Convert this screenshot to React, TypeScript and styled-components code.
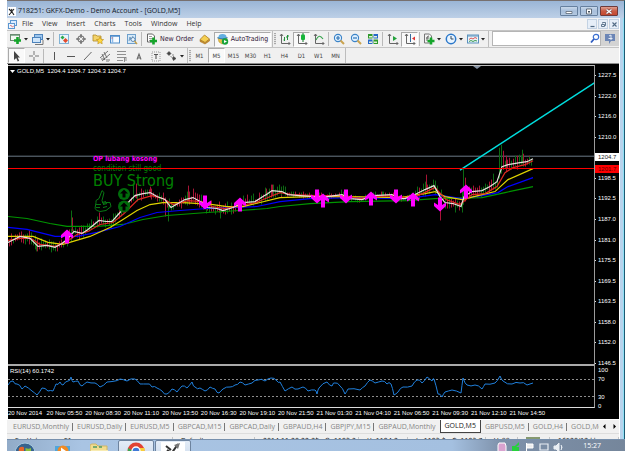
import React from "react";
import styled, { createGlobalStyle, css } from "styled-components";

const GlobalStyle = createGlobalStyle`
  * { box-sizing: border-box; }
  body {
    margin: 0;
    background: #fff;
    font-family: "DejaVu Sans Condensed", "DejaVu Sans", "Liberation Sans", sans-serif;
    font-size: 7px;
    line-height: 10px;
    overflow: hidden;
  }
  button, input { font: inherit; color: inherit; }
`;

/* ---------- frame ---------- */

const Desktop = styled.div`
  height: 100vh;
  padding-left: 7px;
  display: flex;
  flex-direction: column;
`;

const Frame = styled.div`
  flex: 1;
  min-height: 0;
  display: grid;
  grid-template-columns: minmax(0, 1fr) 5px;
  grid-template-rows: 17px minmax(0, 1fr);
  border-top: 1px solid #77706f;
  border-right: 1px solid #1d5a74;
`;

const Main = styled.main`
  min-width: 0;
  min-height: 0;
  display: flex;
  flex-direction: column;
`;

const FrameEdge = styled.div`
  border-left: 1px solid #fff;
  border-right: 1px solid #8fe0f5;
  background: #b8d3ec;
`;

const TitleBar = styled.header`
  grid-column: 1 / -1;
  padding: 3px 6px 0 1px;
  display: flex;
  align-items: center;
  gap: 2px;
  color: #10151d;
  white-space: nowrap;
  background: linear-gradient(#9ab5d6, #bdd0e7);
`;

const TitleText = styled.h1`
  flex: 1;
  margin: 0;
  font-size: 7px;
  line-height: 10px;
  font-weight: 400;
  font-family: "Open Sans", "Noto Sans", sans-serif;
`;

const WindowButton = styled.button<{ $danger?: boolean }>`
  width: 18px;
  height: 10px;
  padding: 0;
  display: flex;
  align-items: center;
  justify-content: center;
  border: 1px solid ${(p) => (p.$danger ? "#6e3a3a" : "#66809f")};
  border-radius: 1px;
  background: ${(p) =>
    p.$danger
      ? "linear-gradient(#dfa091, #c95b44 50%, #c4482f)"
      : "linear-gradient(#c8d8ea, #a8bfdb 50%, #b3c8e0)"};
`;

const MenuBar = styled.nav`
  height: 12px;
  padding-left: 1px;
  display: flex;
  align-items: center;
  background: #f3f3f4;
  color: #333;
  font-family: "Open Sans", "Noto Sans", sans-serif;
`;

const MenuItem = styled.button`
  padding: 0;
  margin-right: 9px;
  border: 0;
  background: none;
  line-height: 10px;
`;

const MenuIcon = styled.span`
  width: 14px;
  display: flex;
`;

const MdiButtons = styled.div`
  margin-left: auto;
  display: flex;
  gap: 1px;
`;

const MdiButton = styled.button`
  width: 10px;
  height: 10px;
  padding: 0;
  display: flex;
  align-items: center;
  justify-content: center;
  border: 1px solid #c3d2e3;
  background: #e6eef8;
`;

/* ---------- toolbars ---------- */

const Toolbar = styled.div<{ $last?: boolean }>`
  height: 17px;
  display: flex;
  background: #f0f0f0;
  border-top: 1px solid #c4c4c4;
  ${(p) => p.$last && css`border-bottom: 1px solid #8c8c8c;`}
`;

const Group = styled.div`
  display: flex;
  align-items: center;
  padding: 0 1px;
  border-right: 1px solid #bdbdbd;
`;

const Separator = styled.div`
  width: 1px;
  height: 14px;
  margin: 0 1px;
  background: #b9b9b9;
`;

const Grip = styled.div`
  width: 2px;
  height: 12px;
  background: repeating-linear-gradient(#aaa 0 1px, #e4e4e4 1px 2px);
`;

const ToolButton = styled.button<{ $pressed?: boolean; $wide?: boolean }>`
  min-width: ${(p) => (p.$wide ? 22 : 17)}px;
  height: 15px;
  padding: 0 1px;
  display: flex;
  align-items: center;
  justify-content: center;
  gap: 2px;
  color: #333;
  border: 1px solid transparent;
  background: none;
  white-space: nowrap;
  ${(p) =>
    p.$pressed &&
    css`
      background: #f9f9f9;
      border-color: #aaa #fff #fff #aaa;
    `}
`;

const LabelButton = styled(ToolButton)`
  color: #301638;
  gap: 2px;
  padding: 0 2px;
`;

const PeriodButton = styled(ToolButton)`
  min-width: 0;
  width: 17px;
  padding: 0;
  font-size: 6px;
  color: #444;
`;

const SearchBox = styled.label`
  flex: 1;
  margin: 0 0 1px 3px;
  display: flex;
  align-items: center;
  border: 1px solid #b5b5b5;
  background: #fff;
`;

const SearchInput = styled.input`
  flex: 1;
  min-width: 0;
  height: 12px;
  padding: 0 2px;
  border: 0;
  outline: 0;
  background: none;
`;

const ChatButton = styled.button`
  width: 18px;
  height: 15px;
  padding: 0;
  display: flex;
  align-items: center;
  justify-content: center;
  border: 0;
  background: #d3d3d3;
`;

/* ---------- chart ---------- */

const ChartWindow = styled.section`
  flex: 1;
  min-height: 0;
  margin-left: 1px;
  padding-top: 1px;
  display: grid;
  grid-template-columns: minmax(0, 1fr) 24px;
  grid-template-rows: minmax(0, 1fr) 44px 11px;
  background: #000;
  color: #fff;
  font-family: "Liberation Sans", Arial, sans-serif;
  font-size: 6px;
  line-height: 8px;
`;

const PricePanel = styled.div`
  position: relative;
  min-height: 0;
  border-top: 1px solid #bcbcbc;
  border-right: 1px solid #9b9b9b;
`;

const RsiPanel = styled.div`
  position: relative;
  border-top: 2px solid #aaa;
  border-right: 1px solid #9b9b9b;
  border-bottom: 1px solid #ddd;
`;

const Drawing = styled.svg`
  display: block;
  width: 100%;
  height: 100%;
`;

const PanelCaption = styled.div`
  position: absolute;
  left: 2px;
  top: 1px;
  display: flex;
  align-items: center;
  gap: 2px;
  white-space: pre;
`;

const Signal = styled.div`
  position: absolute;
  left: 85px;
  top: 89px;
  display: flex;
  flex-direction: column;
  white-space: nowrap;
  color: #008000;
  font-family: "DejaVu Sans Condensed", "DejaVu Sans", sans-serif;
`;

const SignalNote = styled.span<{ $strong?: boolean }>`
  font-size: 8px;
  line-height: 9px;
  ${(p) => p.$strong && css`color: #f0f; font-size: 7px; font-weight: 700;`}
`;

const SignalTitle = styled.strong`
  font-size: 16px;
  line-height: 15px;
  font-weight: 400;
`;

const AlertLine = styled.div`
  position: absolute;
  left: 0;
  right: 0;
  top: 102px;
  height: 1px;
  background: #f00;
`;

const PriceAxis = styled.div`
  position: relative;
  margin-bottom: -3px;
  padding-top: 6px;
  display: flex;
  flex-direction: column;
  justify-content: space-between;
`;

const PriceLabel = styled.div<{ $current?: boolean }>`
  position: relative;
  height: 8px;
  padding-left: 3px;
  ${(p) =>
    p.$current
      ? css`background: #fff; color: #222;`
      : css`
          &::before {
            content: "";
            position: absolute;
            left: 0;
            top: 4px;
            width: 1px;
            height: 1px;
            background: #ddd;
          }
        `}
`;

const AlertPrice = styled.div`
  position: absolute;
  left: 0;
  right: 0;
  top: 100px;
  padding-left: 3px;
  background: #f00;
  color: #500;
`;

const RsiAxis = styled.div`
  margin-bottom: -3px;
  padding: 2px 0 0 3px;
  display: flex;
  flex-direction: column;
  justify-content: space-between;
  line-height: 9px;
`;

const RsiPair = styled.div`
  display: flex;
  flex-direction: column;
`;

const TimeAxis = styled.div`
  width: 92%;
  display: grid;
  grid-template-columns: repeat(14, minmax(0, 1fr));
  line-height: 11px;
  white-space: nowrap;
`;

/* ---------- bottom ---------- */

const TabBar = styled.div`
  height: 14px;
  display: flex;
  align-items: stretch;
  border-top: 1px solid #fff;
  background: #f1f1f1;
  color: #858585;
  padding-left: 2px;
  font-family: "Open Sans", "Noto Sans", sans-serif;
`;

const TabList = styled.div`
  flex: 1;
  min-width: 0;
  display: flex;
  overflow: hidden;
`;

const Tab = styled.button<{ $active?: boolean; $bare?: boolean }>`
  flex: none;
  padding: 0 4px;
  border: 0;
  background: none;
  position: relative;
  line-height: 10px;
  ${(p) =>
    p.$active
      ? css`
          color: #222;
          background: #fff;
          border: 1px solid #444;
          border-top: 0;
        `
      : !p.$bare &&
        css`
          &::after {
            content: "";
            position: absolute;
            right: 0;
            top: 3px;
            width: 1px;
            height: 8px;
            background: #777;
          }
        `}
`;

const TabScroll = styled.button`
  width: 10px;
  padding: 0;
  border: 0;
  background: none;
  display: flex;
  align-items: center;
  justify-content: center;
`;

const StatusBar = styled.footer`
  height: 6px;
  padding-top: 3px;
  display: grid;
  grid-template-columns: 166px 82px 62px 42px 49px 36px 42px 32px 32px 1fr;
  overflow: hidden;
  background: #f0f0f0;
  border-top: 1px solid #ddd;
  color: #222;
`;

const StatusCell = styled.span`
  padding-left: 8px;
  border-right: 1px solid #c5c5c5;
  white-space: nowrap;
  line-height: 8px;
`;

const Taskbar = styled.div`
  height: 12px;
  padding-right: 24px;
  display: flex;
  align-items: flex-start;
  overflow: hidden;
  border-top: 1px solid #7790ad;
  background: linear-gradient(90deg, #91abc8, #a9c4e3 12%, #a4c0e0 72%, #7e91aa 80%, #75869b);
`;

const TaskButton = styled.button<{ $open?: boolean }>`
  width: 36px;
  height: 24px;
  flex: none;
  margin-right: 1px;
  padding: 1px 0 0;
  display: flex;
  justify-content: center;
  align-items: flex-start;
  border: 1px solid transparent;
  border-radius: 2px;
  background: none;
  ${(p) =>
    p.$open &&
    css`
      border-color: #6d839e;
      background: linear-gradient(#e3ecf7, #c9d8ea);
    `}
`;

const Tray = styled.div`
  margin-left: auto;
  display: flex;
  gap: 4px;
  color: #fff;
  padding-top: 1px;
  font-family: "Open Sans", "Noto Sans", sans-serif;
`;

const Clock = styled.time`
  padding-left: 16px;
`;

/* ---------- icons ---------- */

const Glyph = ({ name, w = 12, h = 12 }: { name: string; w?: number; h?: number }) => (
  <svg width={w} height={h} viewBox={`0 0 ${w} ${h}`} fill="none" aria-hidden="true">
    {glyphs[name]}
  </svg>
);

const plus = (x: number, y: number) => (
  <path d={`M${x} ${y - 3.5}v7M${x - 3.5} ${y}h7`} stroke="#15a52b" strokeWidth="2.6" />
);

const axes = <path d="M2.5 1v9.5H11M1 3l1.5-2L4 3M9.5 9l1.5 1.5L9.5 12" stroke="#666" strokeWidth="1" />;

const glyphs: Record<string, React.ReactNode> = {
  app: (
    <>
      <rect width="8" height="9" fill="#fff" />
      <path d="M1 2l2 2 1-2M1 8l5-6M4 5l2 3" stroke="#222" strokeWidth="1.1" />
    </>
  ),
  windows: (
    <>
      <rect x="2.5" y=".5" width="6" height="5" fill="#dcecff" stroke="#5c96d0" />
      <rect x=".5" y="3.5" width="6" height="5" fill="#eef6ff" stroke="#5c96d0" />
      <path d="M2 6l1-1 1 2 2-1" stroke="#d66" strokeWidth=".7" />
    </>
  ),
  min: <path d="M1 3.5h6v2H1z" fill="#fff" stroke="#4e5966" strokeWidth=".7" />,
  max: (
    <>
      <path d="M1.5 1h5v5h-5z" fill="#fff" stroke="#45515e" strokeWidth=".8" />
      <path d="M3 3h2v1.5H3z" fill="#45515e" />
    </>
  ),
  close: (
    <>
      <path d="M1.5 1.5l5 4m0-4l-5 4" stroke="#6b3a3a" strokeWidth="2.4" />
      <path d="M1.5 1.5l5 4m0-4l-5 4" stroke="#fff" strokeWidth="1.5" />
    </>
  ),
  mdiMin: <path d="M1.5 5.5h4" stroke="#526b85" strokeWidth="1.2" />,
  mdiMax: <path d="M2.5 2.5v-1h3v3h-1M1.5 3.5h3v2h-3z" stroke="#526b85" strokeWidth=".9" />,
  mdiClose: <path d="M1.5 1.5l4 4m0-4l-4 4" stroke="#526b85" strokeWidth="1.1" />,
  drop: <path d="M0 1h4L2 3.5z" fill="#222" />,
  captionMark: <path d="M0 1h5L2.5 4z" fill="#fff" />,
  left: <path d="M3.5 0v5L1 2.5z" fill="#000" />,
  right: <path d="M1.5 0v5L4 2.5z" fill="#000" />,
  signal: <path d="M1 0v7M3 0v7M5 0v7M7 0v7M9 0v7M11 0v7M13 0v7" stroke="#3f5f1c" strokeWidth="1.2" />,
  newChart: (
    <>
      <rect x=".5" y="1.5" width="9" height="6" fill="#f2f7f2" stroke="#6a8b72" />
      <path d="M1 2.5h8" stroke="#8eb29a" />
      {plus(7.5, 7.5)}
    </>
  ),
  profiles: (
    <>
      <rect x="2.5" y="1.5" width="8" height="5" fill="#9bc5ee" stroke="#4d83bb" />
      <rect x=".5" y="4.5" width="8" height="5" fill="#cfe5fa" stroke="#4d83bb" />
      <path d="M3 11.5h8V7" stroke="#777" />
    </>
  ),
  market: (
    <>
      <rect x="1.5" y="1.5" width="9" height="9" fill="#e8f4fc" stroke="#81b3d5" />
      <path d="M2.5 4.5l2-2 2 2-2 2z" fill="#2da84a" />
      <path d="M5 7.5l2.5-2.5L10 7.5 7.5 10z" fill="#e34b2d" />
    </>
  ),
  target: (
    <>
      <circle cx="6" cy="6" r="3.2" stroke="#666" />
      <path d="M6 1v4M6 7v4M1 6h4M7 6h4" stroke="#555" strokeWidth="1.1" />
    </>
  ),
  favorite: (
    <>
      <path d="M1 2h3l1 1h4v5H1z" fill="#f3d36b" stroke="#b08c27" strokeWidth=".8" />
      <path d="M8 4l1.1 2.3 2.5.3-1.8 1.7.4 2.5L8 9.6l-2.2 1.2.4-2.5-1.8-1.7 2.5-.3z" fill="#ffd83e" stroke="#b98818" strokeWidth=".6" />
    </>
  ),
  terminal: (
    <>
      <rect x="1.5" y="2.5" width="9" height="7.5" fill="#f7fbff" stroke="#4f8dca" />
      <path d="M1 3h10" stroke="#4f8dca" strokeWidth="1.5" />
      <path d="M3.5 4v6" stroke="#8ebbe8" strokeWidth="1.5" />
      <path d="M2.5 5h1" stroke="#d44" />
    </>
  ),
  tester: (
    <>
      <rect x="1.5" y="1.5" width="8" height="9" fill="#d6e9f8" stroke="#6fa0cc" />
      <path d="M3 8l1-4 1 3 2-4" stroke="#5788b5" strokeWidth=".8" />
      <circle cx="7" cy="6.5" r="2" fill="#e8f4ff" stroke="#648bb0" />
      <path d="M8.5 8l2.5 3" stroke="#c7a14a" strokeWidth="1.4" />
    </>
  ),
  order: (
    <>
      <path d="M1.5 1h5l2 2v6h-7z" fill="#fff" stroke="#666" />
      <path d="M3 3.5h3M3 5.5h4M3 7.5h2" stroke="#777" strokeWidth=".7" />
      {plus(7.5, 8)}
    </>
  ),
  editor: (
    <>
      <path d="M1 6.5L5.5 2l5 4L6 9.5z" fill="#f5cf51" stroke="#aa781e" strokeWidth=".8" />
      <path d="M1 7l5 3 4.5-3.5v1.5L6 11 1 8.5z" fill="#d9961e" stroke="#94651b" strokeWidth=".5" />
    </>
  ),
  auto: (
    <>
      <ellipse cx="5.5" cy="4" rx="4" ry="3" fill="#61aee0" />
      <path d="M1 5l4.5 1.5L10 5 9 9 5 11 2 9z" fill="#e8c24a" stroke="#b38b22" strokeWidth=".5" />
      <path d="M.5 4.5Q5 7 10.5 4.5" stroke="#317fb8" strokeWidth="1.2" />
      <circle cx="8" cy="8.5" r="3.2" fill="#18a33a" />
      <path d="M7 7l3 1.5-3 1.5z" fill="#fff" />
    </>
  ),
  bars: (
    <>
      {axes}
      <path d="M5.5 4v4M5.5 7h-1M8.5 2v5M7 4h1.5M8.5 3H10" stroke="#24913c" />
    </>
  ),
  candle: (
    <>
      {axes}
      <path d="M7 0v9" stroke="#157a2b" />
      <rect x="5" y="1.5" width="4" height="5.5" rx="1" fill="#18b53b" />
    </>
  ),
  line: (
    <>
      {axes}
      <path d="M3 7Q6 0 10 6" stroke="#35a34b" strokeWidth="1.1" />
    </>
  ),
  zoomIn: (
    <>
      <circle cx="5" cy="5" r="3.6" fill="#dff0ff" stroke="#3b83c7" strokeWidth="1.1" />
      <path d="M5 3v4M3 5h4" stroke="#2f74b5" strokeWidth="1.2" />
      <path d="M7.5 7.5l3.5 3.5" stroke="#caa350" strokeWidth="2" />
    </>
  ),
  zoomOut: (
    <>
      <circle cx="5" cy="5" r="3.6" fill="#dff0ff" stroke="#3b83c7" strokeWidth="1.1" />
      <path d="M3 5h4" stroke="#2f74b5" strokeWidth="1.2" />
      <path d="M7.5 7.5l3.5 3.5" stroke="#caa350" strokeWidth="2" />
    </>
  ),
  tile: (
    <>
      <path d="M1 1h4.5v4.5H1zM6.5 6.5H11V11H6.5z" fill="#2f9a2c" />
      <path d="M6.5 1H11v4.5H6.5zM1 6.5h4.5V11H1z" fill="#2668c8" />
      <path d="M2 3h3v1.5H2zM7 3h3v1.5H7zM2 8.5h3V10H2zM7 8.5h3V10H7z" fill="#e4f2d8" />
    </>
  ),
  scroll: (
    <>
      {axes}
      <path d="M6 3l4 2.5L6 8z" fill="#23a13b" />
    </>
  ),
  shift: (
    <>
      {axes}
      <path d="M6.5 1v8" stroke="#376b9c" />
      <path d="M11 3.5L8 5.5l3 2z" fill="#d33" />
    </>
  ),
  indicators: (
    <>
      <path d="M1.5 1h5l2 2v7h-7z" fill="#f3f3f3" stroke="#777" />
      <path d="M6 3Q4 3 4 5v3M3 5h3" stroke="#666" />
      {plus(8, 8)}
    </>
  ),
  clock: (
    <>
      <circle cx="6" cy="6" r="4.7" fill="#e8f4ff" stroke="#2b78ca" strokeWidth="1.5" />
      <path d="M6 3v3h2.5" stroke="#345" />
    </>
  ),
  template: (
    <>
      <rect x=".5" y="2" width="11" height="8" fill="#e9f4fb" stroke="#5b91bd" />
      <path d="M1 3h10" stroke="#5b91bd" />
      <path d="M2 6.5l2-1.5 2 1 2-1.5 2 1" stroke="#d55" />
      <path d="M2 8.5l2-1 2 1 2-1 2 .5" stroke="#3a9b51" />
    </>
  ),
  search: (
    <>
      <circle cx="6" cy="4" r="2.7" stroke="#3b6fd0" strokeWidth="1.2" />
      <path d="M4 6L1 9.5" stroke="#2d5bc0" strokeWidth="1.8" />
    </>
  ),
  chat: (
    <>
      <path d="M1 1h10v7H7l-2 3V8H1z" fill="#6c86b6" />
      <path d="M5 3l2-1v5M4.5 5.5h4" stroke="#e5ecf6" />
    </>
  ),
  cursor: <path d="M3 1v9l2.2-2 1.5 3.5 1.5-.7L6.7 7.5H9z" fill="#444" />,
  cross: <path d="M6 1v4M6 7v4M1 6h4M7 6h4" stroke="#777" />,
  vline: <path d="M6.5 2v8" stroke="#555" />,
  hline: <path d="M2 6.5h8" stroke="#555" />,
  trend: <path d="M2 10l7.5-8" stroke="#666" />,
  channel: <path d="M1 8l8-7M3 11l8-7M3 4l3 6M5 2l3 6M2 9h4M7 10h4M7 12h3" stroke="#555" strokeWidth=".8" />,
  fibo: <path d="M1 1.5h9M1 4.5h9M1 7.5h9M1 10.5h6M8.5 12V8h2.5M8.5 10H11" stroke="#777" strokeWidth=".8" />,
  textA: <path d="M4 9.500L6 4l2 5.500M4.500 8h3" stroke="#666" strokeWidth="1.1" />,
  textT: (
    <>
      <rect x="2" y="2" width="8" height="9" stroke="#999" strokeDasharray="1 1" />
      <path d="M4 4.5h4M6 4.5V9" stroke="#555" strokeWidth="1.1" />
    </>
  ),
  shapes: <path d="M3 1.5l2 2-2 2-2-2zM7.5 6.5l2.5 2-2.5 2-1-2zM4.5 6l2 2M6 5h2" fill="#444" stroke="#444" strokeWidth=".6" />,
  orb: (
    <>
      <circle cx="11" cy="11" r="10" fill="#36638d" stroke="#a7c8de" />
      <path d="M5 6q3-2 5-.5V11q-3-1-5.5.5z" fill="#e5652c" />
      <path d="M11.5 6q3 1.5 5.5 0v6q-3 1.5-5.5 0z" fill="#8bbf3c" />
    </>
  ),
  media: (
    <>
      <rect x="1" y="4" width="15" height="11" fill="#4fa6dc" />
      <circle cx="9" cy="9" r="5.5" fill="#f28b24" />
      <path d="M7 5.5l5 3.5-5 3z" fill="#fff" />
    </>
  ),
  folder: (
    <>
      <path d="M0 4q0-2 2-2h4l2 2h9v12H0z" fill="#f1dc8e" stroke="#d0b565" />
      <path d="M3 5h4M9 5h3" stroke="#4e9b63" strokeWidth="1.5" />
      <path d="M1 8h17v8H1z" fill="#f8ebb0" />
    </>
  ),
  chrome: (
    <>
      <circle cx="9" cy="9" r="8.5" fill="#e24334" />
      <path d="M1 6q-1 8 6 11l3-6z" fill="#37a852" />
      <path d="M10 6h7.5q1 8-6 11z" fill="#f9cf38" />
      <circle cx="9" cy="9" r="4" fill="#3e78d8" stroke="#fff" strokeWidth="1.3" />
    </>
  ),
  mt4: (
    <>
      <rect width="24" height="17" fill="#fff" />
      <path d="M5 4l5 4M8 15L17 2M6 8l6 4" stroke="#333" strokeWidth="2" />
      <path d="M13 3l6-2-2 6z" fill="#777" />
    </>
  ),
  trayRound: <path d="M2 2h6l1 3v6H1V4z" fill="#d9a3cf" stroke="#fff" />,
  trayArrow: <path d="M1 5h3L8 1v3l-3 2h3v4H1z" fill="#26d13b" />,
  trayFlag: <path d="M1.5 2v10M2 3h6v4H2" fill="#eee" stroke="#fff" />,
  trayNet: <path d="M1 3h8v6H1zM3 11h4" stroke="#e9eef4" strokeWidth="1.2" />,
  traySound: <path d="M1 5h2l3-3v9L3 8H1zM8 4q2 2 0 5" fill="#e9eef4" stroke="#e9eef4" />,
};

/* ---------- chart data ---------- */

type Point = [number, number];

const fast: Point[] = [
  [8, 243], [14, 240], [20, 237], [30, 239], [38, 247], [47, 246], [55, 248], [62, 244], [67, 240], [74, 232],
  [82, 234], [88, 230], [99, 221], [106, 222], [112, 222], [120, 213], [127, 204], [135, 196], [143, 194], [150, 193],
  [157, 197], [165, 200], [171, 208], [178, 204], [185, 200], [193, 198], [202, 203], [207, 208], [217, 209], [223, 211],
  [233, 208], [243, 203], [255, 202], [263, 197], [268, 194], [272, 191], [282, 192], [288, 195], [300, 196], [315, 197],
  [327, 197], [342, 195], [350, 199], [362, 200], [373, 196], [392, 195], [400, 199], [405, 199], [415, 195], [425, 190],
  [434, 186], [440, 197], [445, 203], [453, 204], [461, 207], [464, 197], [472, 192], [482, 191], [490, 187], [497, 182],
  [502, 167], [508, 165], [520, 163], [527, 162], [533, 159],
];

const slow: Point[] = [
  [8, 241], [20, 239], [31, 239], [40, 245], [55, 247], [67, 242], [77, 235], [88, 232], [100, 225], [113, 223],
  [124, 214], [138, 200], [152, 196], [163, 199], [173, 205], [188, 201], [202, 202], [212, 207], [225, 209], [240, 206],
  [256, 203], [268, 198], [280, 193], [292, 195], [316, 196], [345, 196], [360, 199], [375, 197], [393, 196], [405, 198],
  [418, 196], [435, 188], [446, 200], [460, 205], [472, 195], [485, 194], [497, 187], [505, 173], [513, 168], [525, 165], [533, 161],
];

const yellow: Point[] = [
  [8, 237], [33, 237], [48, 243], [63, 245], [90, 237], [110, 228], [123, 220], [137, 211], [150, 205], [163, 203],
  [183, 203], [200, 204], [213, 205], [227, 207], [243, 207], [260, 203], [280, 198], [310, 197], [350, 197], [400, 198],
  [425, 194], [435, 192], [445, 197], [462, 200], [478, 196], [495, 192], [508, 180], [533, 169],
];

const blue: Point[] = [
  [8, 228], [27, 230], [43, 234], [55, 237], [77, 237], [97, 233], [120, 227], [140, 218], [157, 213], [180, 211],
  [207, 209], [233, 208], [257, 207], [280, 202], [310, 199], [350, 198], [407, 199], [435, 195], [462, 199], [482, 196],
  [498, 193], [508, 187], [533, 178],
];

const green: Point[] = [
  [8, 217], [27, 219], [50, 224], [67, 227], [97, 227], [123, 225], [143, 220], [167, 216], [207, 213], [240, 211],
  [267, 209], [280, 207], [310, 204], [350, 202], [407, 201], [435, 199], [482, 198], [505, 193], [533, 187],
];

const spikes: [number, number, number, boolean][] = [
  [36, 243, 252, true], [71, 211, 228, true], [72, 218, 232, false], [99, 213, 222, false], [133, 184, 201, true],
  [136, 184, 199, false], [150, 187, 198, false], [165, 200, 217, false], [168, 206, 222, true], [188, 186, 202, false],
  [193, 189, 200, false], [206, 203, 214, true], [220, 208, 219, true], [266, 189, 197, false], [272, 185, 196, false],
  [281, 187, 196, true], [341, 190, 199, true], [382, 192, 198, true], [426, 175, 190, false], [433, 181, 191, true],
  [440, 202, 221, false], [455, 203, 213, true], [462, 190, 213, true], [463, 168, 205, true], [465, 178, 200, false],
  [493, 174, 188, true], [499, 148, 178, true], [501, 145, 172, true], [503, 151, 170, false], [506, 156, 172, false],
  [515, 156, 166, true], [522, 150, 164, true], [523, 154, 164, false], [529, 157, 165, true],
];

const rsi: Point[] = [
  [8, 386], [13, 382], [17, 385], [22, 390], [25, 387], [32, 392], [37, 396], [42, 389], [48, 392], [53, 392],
  [56, 385], [60, 383], [63, 386], [68, 382], [71, 378], [73, 383], [78, 382], [82, 387], [87, 383], [95, 384],
  [100, 388], [107, 383], [115, 382], [120, 380], [127, 382], [135, 380], [140, 385], [147, 385], [152, 388], [157, 389],
  [162, 392], [167, 395], [172, 390], [177, 393], [182, 387], [187, 389], [192, 383], [195, 388], [200, 389], [205, 392],
  [210, 388], [215, 390], [219, 394], [223, 390], [230, 388], [235, 386], [240, 383], [245, 386], [252, 384], [258, 381],
  [265, 382], [271, 379], [277, 382], [280, 383], [285, 392], [292, 388], [298, 390], [303, 388], [308, 392], [315, 391],
  [317, 395], [319, 389], [327, 383], [332, 387], [335, 384], [340, 387], [345, 395], [348, 390], [360, 391], [365, 387],
  [370, 381], [375, 384], [382, 382], [387, 385], [391, 385], [394, 396], [398, 393], [403, 388], [412, 387], [417, 381],
  [422, 384], [427, 378], [432, 382], [434, 380], [438, 395], [442, 398], [445, 393], [452, 391], [461, 394], [463, 379],
  [467, 386], [475, 386], [482, 390], [485, 385], [495, 384], [500, 377], [503, 382], [512, 385], [520, 384], [527, 386], [533, 384],
];

const arrows: [number, number, boolean][] = [
  [67, 230, true], [205, 196, false], [240, 198, true], [317, 190, false], [323, 194, true], [346, 190, false],
  [371, 192, true], [396, 190, false], [413, 193, true], [440, 198, false], [466, 185, true],
];

const prices = [
  "1227.5", "1222.0", "1216.0", "1210.0", "1204.7", "1198.5", "1192.5", "1187.0",
  "1181.0", "1175.5", "1169.5", "1163.5", "1158.0", "1152.0", "1146.5",
];

const times = [
  "20 Nov 2014", "20 Nov 05:50", "20 Nov 08:30", "20 Nov 11:10", "20 Nov 13:50", "20 Nov 16:30", "20 Nov 19:10",
  "20 Nov 21:50", "21 Nov 01:30", "21 Nov 04:10", "21 Nov 06:50", "21 Nov 09:30", "21 Nov 12:10", "21 Nov 14:50",
];

const toPath = (points: Point[]) => "M" + points.map((p) => p.join(" ")).join("L");

const valueAt = (points: Point[], x: number) => {
  const i = Math.max(1, points.findIndex((p) => p[0] >= x));
  const [x0, y0] = points[i - 1];
  const [x1, y1] = points[i];
  return y0 + ((y1 - y0) * (x - x0)) / (x1 - x0);
};

const noise = (n: number) => {
  const v = Math.sin(n * 12.9898) * 43758.5453;
  return v - Math.floor(v);
};

const candles = Array.from({ length: 262 }, (_, i) => {
  const x = 9 + i * 2;
  const y = valueAt(fast, x);
  const calm = x > 285 && x < 415 ? 0.5 : 1;
  return {
    x,
    top: Math.round(y - (1 + noise(i) * 7) * calm),
    bottom: Math.round(y + (1 + noise(i + 500) * 6) * calm),
    up: noise(i + 900) > 0.5,
  };
}).filter((c) => c.x <= 533);

const roughRsi = rsi.flatMap((p, i): Point[] => {
  const next = rsi[i + 1];
  if (!next) return [p];
  return [p, [(p[0] + next[0]) / 2, (p[1] + next[1]) / 2 + (noise(i) - 0.5) * 3]];
});

const UP = "#0b6a12";
const DOWN = "#a81436";

const PriceDrawing = () => (
  <Drawing viewBox="8 66 586 299" preserveAspectRatio="none" role="img" aria-label="GOLD M5 price chart">
    <path d="M8 156.5h587" stroke="#6c7a88" />
    <g strokeWidth="1">
      {candles.map((c) => (
        <path key={c.x} d={`M${c.x + 0.5} ${c.top}V${c.bottom}`} stroke={c.up ? UP : DOWN} />
      ))}
      {spikes.map(([x, a, b, up]) => (
        <path key={`${x}-${a}`} d={`M${x + 0.5} ${a}V${b}`} stroke={up ? UP : DOWN} />
      ))}
    </g>
    <g fill="none" strokeWidth="1.2">
      <path d={toPath(green)} stroke="#009500" />
      <path d={toPath(blue)} stroke="#0000ff" />
      <path d={toPath(yellow)} stroke="#e0d400" />
      <path d={toPath(slow)} stroke="#e02a22" />
      <path d={toPath(fast)} stroke="#e6e0dc" />
    </g>
    <path d="M460 170.5L595 82.5" stroke="#00dede" strokeWidth="1.5" />
    <g fill="#f0f">
      {arrows.map(([x, y, up]) => (
        <path
          key={x}
          transform={up ? `translate(${x} ${y})` : `translate(${x} ${y + 14}) scale(1 -1)`}
          d="M0 0l6 5.5v3.5l-4-2.5V14h-4V6.5L-6 9V5.5z"
        />
      ))}
    </g>
    <path
      d="M96 203l-1 6 2 2 3 1 6-1 5-4-1-4-4 0-3 1-1-3 2-8-2-2-3 8-3 2zm6 0l4-1m-3 3l4-1m-4 4l4-1m-11-2h5m-5 3h4"
      stroke="#087a14"
      fill="none"
    />
    <circle cx="124" cy="194.5" r="6" fill="#006c0b" />
    <circle cx="124" cy="207" r="6" fill="#006c0b" />
    <path d="M124 190l4 4h-2.5v4h-3v-4H120zM124 203l4 4h-2.5v4h-3v-4H120z" fill="#000" />
    <path d="M473 66h8l-4 3z" fill="#8794a5" />
  </Drawing>
);

const RsiDrawing = () => (
  <Drawing viewBox="8 367 586 41" preserveAspectRatio="none" role="img" aria-label="RSI indicator">
    <path d="M8 380.5h587M8 397.5h587" stroke="#8e8e8e" strokeDasharray="2 2" />
    <path d={toPath(roughRsi)} fill="none" stroke="#2080dd" strokeWidth="1" />
  </Drawing>
);

const Tool = ({ icon, label, pressed, drop }: { icon: string; label: string; pressed?: boolean; drop?: boolean }) => (
  <ToolButton $pressed={pressed} $wide={drop} aria-label={label}>
    <Glyph name={icon} />
    {drop && <Glyph name="drop" w={4} h={4} />}
  </ToolButton>
);

const tabs = [
  "EURUSD,Monthly", "EURUSD,Daily", "EURUSD,M5", "GBPCAD,M15", "GBPCAD,Daily", "GBPAUD,H4",
  "GBPJPY,M15", "GBPAUD,Monthly", "GOLD,M5", "GBPUSD,M5", "GOLD,H4", "GOLD,Monthly",
];

const status = [
  "For Help, press F1", "Default", "2014.11.20 22:25", "O: 1193.2", "H: 1194.2", "L: 1193.2", "C: 1193.7", "V: 88",
];

export default function App() {
  return (
    <>
      <GlobalStyle />
      <Desktop>
        <Frame>
          <TitleBar>
            <Glyph name="app" w={8} h={9} />
            <TitleText>718251: GKFX-Demo - Demo Account - [GOLD,M5]</TitleText>
            <WindowButton aria-label="Minimize"><Glyph name="min" w={8} h={7} /></WindowButton>
            <WindowButton aria-label="Maximize"><Glyph name="max" w={8} h={7} /></WindowButton>
            <WindowButton aria-label="Close" $danger><Glyph name="close" w={8} h={7} /></WindowButton>
          </TitleBar>
          <Main>
            <MenuBar>
              <MenuIcon><Glyph name="windows" w={9} h={9} /></MenuIcon>
              {["File", "View", "Insert", "Charts", "Tools", "Window", "Help"].map((m) => (
                <MenuItem key={m}>{m}</MenuItem>
              ))}
              <MdiButtons>
                <MdiButton aria-label="Minimize chart"><Glyph name="mdiMin" w={7} h={7} /></MdiButton>
                <MdiButton aria-label="Restore chart"><Glyph name="mdiMax" w={7} h={7} /></MdiButton>
                <MdiButton aria-label="Close chart"><Glyph name="mdiClose" w={7} h={7} /></MdiButton>
              </MdiButtons>
            </MenuBar>
            <Toolbar>
              <Group>
                <Tool icon="newChart" label="New chart" drop />
                <Tool icon="profiles" label="Profiles" drop />
                <Separator />
                <Tool icon="market" label="Market watch" />
                <Tool icon="target" label="Data window" />
                <Tool icon="favorite" label="Navigator" />
                <Tool icon="terminal" label="Terminal" />
                <Tool icon="tester" label="Strategy tester" />
                <Separator />
                <LabelButton><Glyph name="order" />New Order</LabelButton>
                <Tool icon="editor" label="MetaEditor" />
                <LabelButton $pressed><Glyph name="auto" />AutoTrading</LabelButton>
              </Group>
              <Group>
                <Grip />
                <Tool icon="bars" label="Bar chart" />
                <Tool icon="candle" label="Candlesticks" pressed />
                <Tool icon="line" label="Line chart" />
                <Separator />
                <Tool icon="zoomIn" label="Zoom in" />
                <Tool icon="zoomOut" label="Zoom out" />
                <Tool icon="tile" label="Tile windows" />
                <Separator />
                <Tool icon="scroll" label="Auto scroll" />
                <Tool icon="shift" label="Chart shift" pressed />
                <Separator />
                <Tool icon="indicators" label="Indicators" drop />
                <Tool icon="clock" label="Periods" drop />
                <Tool icon="template" label="Templates" drop />
              </Group>
              <SearchBox>
                <SearchInput aria-label="Search" />
                <Glyph name="search" w={10} h={11} />
              </SearchBox>
              <ChatButton aria-label="Messages"><Glyph name="chat" /></ChatButton>
            </Toolbar>
            <Toolbar $last>
              <Group>
                <Tool icon="cursor" label="Cursor" pressed />
                <Tool icon="cross" label="Crosshair" />
                <Separator />
                <Tool icon="vline" label="Vertical line" />
                <Tool icon="hline" label="Horizontal line" />
                <Tool icon="trend" label="Trendline" />
                <Tool icon="channel" label="Channel" />
                <Tool icon="fibo" label="Fibonacci" />
                <Tool icon="textA" label="Text" />
                <Tool icon="textT" label="Text label" />
                <Tool icon="shapes" label="Arrows" drop />
              </Group>
              <Group>
                <Grip />
                {["M1", "M5", "M15", "M30", "H1", "H4", "D1", "W1", "MN"].map((p) => (
                  <PeriodButton key={p} $pressed={p === "M5"}>{p}</PeriodButton>
                ))}
              </Group>
            </Toolbar>
            <ChartWindow>
              <PricePanel>
                <PriceDrawing />
                <PanelCaption>
                  <Glyph name="captionMark" w={5} h={5} />
                  GOLD,M5  1204.4 1204.7 1204.3 1204.7
                </PanelCaption>
                <Signal>
                  <SignalNote $strong>OP lubang kosong</SignalNote>
                  <SignalNote>condition still good</SignalNote>
                  <SignalTitle>BUY Strong</SignalTitle>
                </Signal>
                <AlertLine />
              </PricePanel>
              <PriceAxis>
                {prices.map((p) => (
                  <PriceLabel key={p} $current={p === "1204.7"}>{p}</PriceLabel>
                ))}
                <AlertPrice>1201.7</AlertPrice>
              </PriceAxis>
              <RsiPanel>
                <RsiDrawing />
                <PanelCaption>RSI(14) 60.1742</PanelCaption>
              </RsiPanel>
              <RsiAxis>
                <RsiPair><span>100</span><span>70</span></RsiPair>
                <RsiPair><span>30</span><span>0</span></RsiPair>
              </RsiAxis>
              <TimeAxis>
                {times.map((t) => <span key={t}>{t}</span>)}
              </TimeAxis>
            </ChartWindow>
            <TabBar>
              <TabList>
                {tabs.map((t, i) => (
                  <Tab key={t} $active={t === "GOLD,M5"} $bare={tabs[i + 1] === "GOLD,M5"}>{t}</Tab>
                ))}
              </TabList>
              <TabScroll aria-label="Previous tabs"><Glyph name="left" w={5} h={5} /></TabScroll>
              <TabScroll aria-label="Next tabs"><Glyph name="right" w={5} h={5} /></TabScroll>
            </TabBar>
            <StatusBar>
              {status.map((s) => <StatusCell key={s}>{s}</StatusCell>)}
              <StatusCell><Glyph name="signal" w={14} h={7} /></StatusCell>
              <StatusCell>16520/12 kb</StatusCell>
            </StatusBar>
          </Main>
          <FrameEdge />
        </Frame>
        <Taskbar>
          <TaskButton aria-label="Start"><Glyph name="orb" w={22} h={22} /></TaskButton>
          <TaskButton aria-label="Media player"><Glyph name="media" w={17} h={17} /></TaskButton>
          <TaskButton aria-label="Explorer"><Glyph name="folder" w={19} h={17} /></TaskButton>
          <TaskButton $open aria-label="Chrome"><Glyph name="chrome" w={18} h={18} /></TaskButton>
          <TaskButton $open aria-label="MetaTrader"><Glyph name="mt4" w={24} h={17} /></TaskButton>
          <Tray>
            <Glyph name="trayRound" w={10} />
            <Glyph name="trayArrow" w={10} />
            <Glyph name="trayFlag" w={10} />
            <Glyph name="trayNet" w={10} />
            <Glyph name="traySound" w={10} />
            <Clock>15:27</Clock>
          </Tray>
        </Taskbar>
      </Desktop>
    </>
  );
}
